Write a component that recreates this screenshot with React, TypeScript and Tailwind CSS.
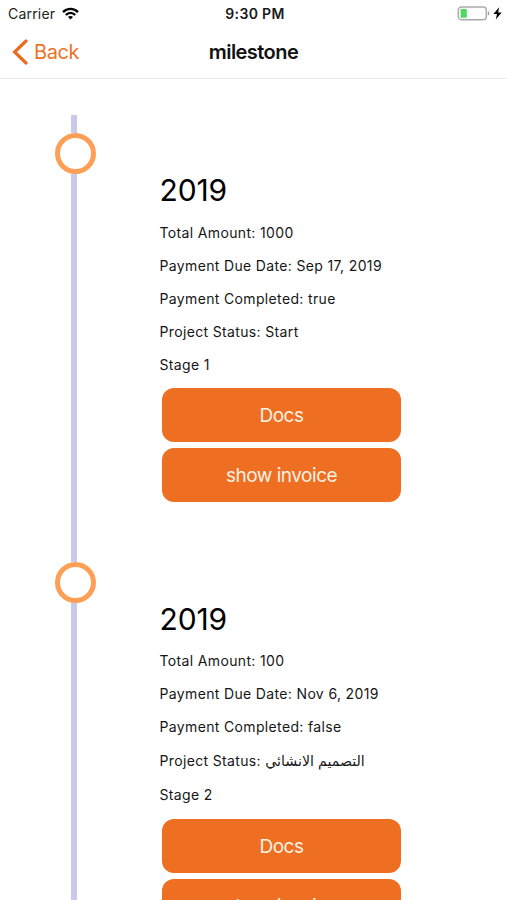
import React from "react";

type Line = { text: string; arabic?: string; box: string };
type Milestone = { year: string; lines: Line[] };

const milestones: Milestone[] = [
  {
    year: "2019",
    lines: [
      { text: "Total Amount: 1000", box: "h-[33px]" },
      { text: "Payment Due Date: Sep 17, 2019", box: "h-[33px]" },
      { text: "Payment Completed: true", box: "h-[33px]" },
      { text: "Project Status: Start", box: "h-[33px]" },
      { text: "Stage 1", box: "h-[33px]" },
    ],
  },
  {
    year: "2019",
    lines: [
      { text: "Total Amount: 100", box: "h-[33px]" },
      { text: "Payment Due Date: Nov 6, 2019", box: "h-[33px]" },
      { text: "Payment Completed: false", box: "h-[33px]" },
      { text: "Project Status: ", arabic: "التصميم الانشائي", box: "h-[34.5px]" },
      { text: "Stage 2", box: "h-[34px]" },
    ],
  },
];

function StatusBar() {
  return (
    <div className="flex h-[27px] shrink-0 items-center pl-2 pr-[5px]">
      <div className="flex flex-1 items-center gap-[7px]">
        <span className="text-[14px] leading-none tracking-[0.2px] text-[#222]">Carrier</span>
        <svg width="17" height="13" viewBox="0 0 17 13" fill="none" stroke="#000" strokeWidth="2.3">
          <path d="M1 5.1C5 .8 12 .8 16 5.1" />
          <path d="M3.8 8C6.6 5.1 10.4 5.1 13.2 8" />
          <path d="M6 10C7.4 8.7 9.6 8.7 11 10L8.5 12.5Z" fill="#000" stroke="none" />
        </svg>
      </div>
      <span className="text-[14px] font-semibold leading-none tracking-[0.35px] text-[#1a1a1a]">9:30 PM</span>
      <div className="flex flex-1 items-center justify-end gap-[3px]">
        <svg width="33" height="15" viewBox="0 0 33 15">
          <rect x="1.3" y="1" width="28" height="12.8" rx="3.2" fill="#fff" stroke="#aaa" strokeWidth="1.4" />
          <rect x="3.6" y="3" width="6.2" height="8.8" rx="0.6" fill="#4cd964" />
          <path d="M30.8 5.2C32.8 5.8 32.8 9 30.8 9.5Z" fill="#999" />
        </svg>
        <svg width="9" height="13" viewBox="0 0 9 13">
          <path d="M6.2 0.3L0.4 7H4L2.8 12.5L8.7 5.5H5.1Z" fill="#000" />
        </svg>
      </div>
    </div>
  );
}

function NavBar() {
  return (
    <div className="grid h-[52px] shrink-0 grid-cols-3 items-center border-b border-[#ececec] pb-[2px]">
      <button className="flex items-center gap-[6px] pl-3 text-[#ed7226]">
        <svg width="16" height="26" viewBox="0 0 16 26" fill="none" stroke="#ed6c20" strokeWidth="3.2" strokeLinecap="round">
          <path d="M14 2L2.6 13L14 24" />
        </svg>
        <span className="text-[20px] leading-none tracking-[-0.4px]">Back</span>
      </button>
      <h1 className="text-center text-[20px] font-semibold leading-none tracking-[-0.55px] text-[#111]">milestone</h1>
    </div>
  );
}

function ActionButton({ label }: { label: string }) {
  return (
    <button className="flex h-[54.5px] w-[239px] shrink-0 items-center justify-center rounded-[12px] bg-[#ee6f22] pt-[1.5px] text-[19px] leading-none tracking-[-0.48px] text-[#fff1e4]">
      {label}
    </button>
  );
}

function TimelineItem({ item }: { item: Milestone }) {
  return (
    <section className="flex h-[428.5px] shrink-0">
      <div className="flex w-[41px] shrink-0 flex-col items-center">
        <div className="mr-[3px] h-[18px] w-[6px] bg-[#c9c9eb]" />
        <div className="h-[41px] w-[41px] shrink-0 rounded-full border-[5px] border-[#ff9f55]" />
        <div className="mr-[3px] w-[6px] flex-1 bg-[#c9c9eb]" />
      </div>
      <div className="ml-[63.5px] flex flex-col pt-[54px]">
        <h2 className="flex h-[47px] items-center pb-[5px] text-[30px] leading-none tracking-[-0.1px] text-black">{item.year}</h2>
        {item.lines.map((line) => (
          <p key={line.text} className={`flex shrink-0 items-center whitespace-pre text-[14px] leading-none tracking-[0.35px] text-[#161616] ${line.box}`}>
            {line.text}
            {line.arabic && <span dir="rtl" className="text-[14.2px] tracking-normal">{line.arabic}</span>}
          </p>
        ))}
        <div className="ml-[2.5px] mt-[6.5px] flex flex-col gap-[5.5px]">
          <ActionButton label="Docs" />
          <ActionButton label="show invoice" />
        </div>
      </div>
    </section>
  );
}

export default function App() {
  return (
    <div className="flex h-[900px] w-[507px] flex-col overflow-hidden bg-white font-['Inter','DejaVu_Sans',sans-serif]">
      <StatusBar />
      <NavBar />
      <main className="flex min-h-0 flex-1 flex-col overflow-hidden pl-[55px] pt-[36px]">
        {milestones.map((item, i) => (
          <TimelineItem key={i} item={item} />
        ))}
      </main>
    </div>
  );
}
